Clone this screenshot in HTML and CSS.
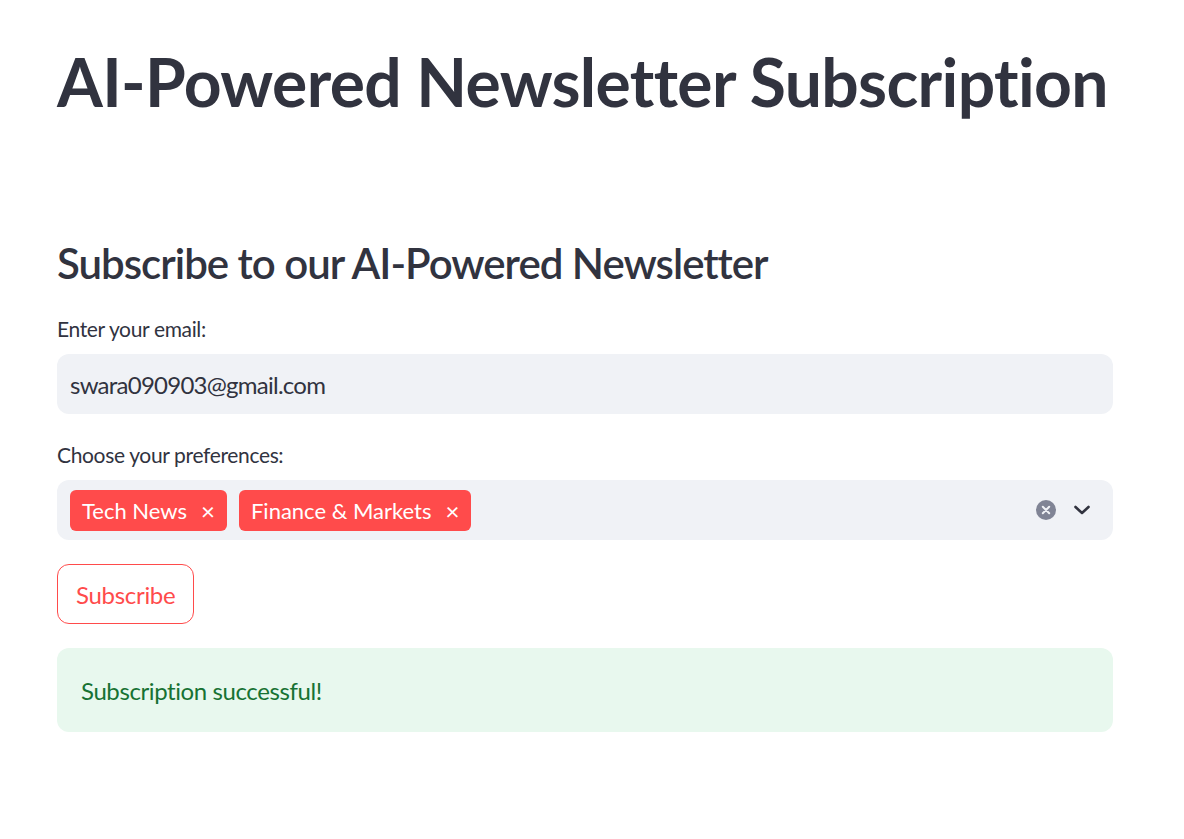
FILE: index.html
```html
<!DOCTYPE html>
<html>
<head>
<meta charset="utf-8">
<link rel="stylesheet" href="styles.css">
</head>
<body>
<main class="page">
  <h1 class="title">AI-Powered Newsletter Subscription</h1>
  <section class="form">
    <h2 class="subheader">Subscribe to our AI-Powered Newsletter</h2>
    <div class="field">
      <label class="label">Enter your email:</label>
      <div class="input email">swara090903@gmail.com</div>
    </div>
    <div class="field">
      <label class="label">Choose your preferences:</label>
      <div class="input select">
        <div class="tags">
          <span class="tag">Tech News<span class="tag-x">×</span></span>
          <span class="tag">Finance &amp; Markets<span class="tag-x">×</span></span>
        </div>
        <div class="controls">
          <svg class="clear" width="20" height="20" viewBox="0 0 20 20"><circle cx="10" cy="10" r="10" fill="#808495"/><path d="M6.8 6.8 L13.2 13.2 M13.2 6.8 L6.8 13.2" stroke="#f0f2f6" stroke-width="2" stroke-linecap="round"/></svg>
          <svg class="chev" width="18" height="12" viewBox="0 0 18 12"><path d="M2.5 3 L9 9 L15.5 3" fill="none" stroke="#31333f" stroke-width="2.6" stroke-linecap="round" stroke-linejoin="round"/></svg>
        </div>
      </div>
    </div>
    <div><button class="btn">Subscribe</button></div>
    <div class="alert">Subscription successful!</div>
  </section>
</main>
</body>
</html>
```
FILE: styles.css
```css
* { box-sizing: border-box; }
body {
  margin: 0;
  background: #ffffff;
  color: #31333f;
  font-family: "Lato", "Open Sans", sans-serif;
}
.page {
  width: 1056px;
  margin-left: 57px;
  padding-top: 42px;
}
.title {
  margin: 0;
  font-size: 66px;
  line-height: 80px;
  font-weight: 700;
  letter-spacing: -0.67px;
  white-space: nowrap;
  color: #31333f;
}
.form {
  margin-top: 116px;
  display: flex;
  flex-direction: column;
  gap: 24px;
}
.subheader {
  margin: 0;
  font-size: 42px;
  line-height: 50px;
  font-weight: 600;
  letter-spacing: -1px;
}
.field { display: flex; flex-direction: column; }
.label {
  font-size: 21px;
  line-height: 34px;
  margin-bottom: 8px;
  letter-spacing: -0.35px;
}
.input {
  height: 60px;
  background: #f0f2f6;
  border-radius: 12px;
  padding: 0 13px;
  display: flex;
  align-items: center;
  font-size: 24px;
}
.email { letter-spacing: -0.75px; }
.select { justify-content: space-between; }
.tags { display: flex; gap: 12px; }
.tag {
  background: #ff4b4b;
  color: #ffffff;
  height: 41px;
  border-radius: 6px;
  padding: 0 12px;
  display: inline-flex;
  align-items: center;
  font-size: 22px;
}
.tag-x { margin-left: 14px; font-size: 24px; }
.controls { display: flex; align-items: center; gap: 17px; padding-right: 9px; }
.chev { display: block; }
.clear { display: block; }
.btn {
  height: 60px;
  padding: 0 18px;
  background: #ffffff;
  border: 1px solid #ff4b4b;
  border-radius: 12px;
  color: #ff4b4b;
  font-family: inherit;
  font-size: 24px;
  letter-spacing: -0.3px;
}
.alert {
  height: 84px;
  background: #e8f8ee;
  border-radius: 12px;
  padding: 0 24px;
  display: flex;
  align-items: center;
  color: #177233;
  font-size: 24px;
  letter-spacing: -0.4px;
}
```
